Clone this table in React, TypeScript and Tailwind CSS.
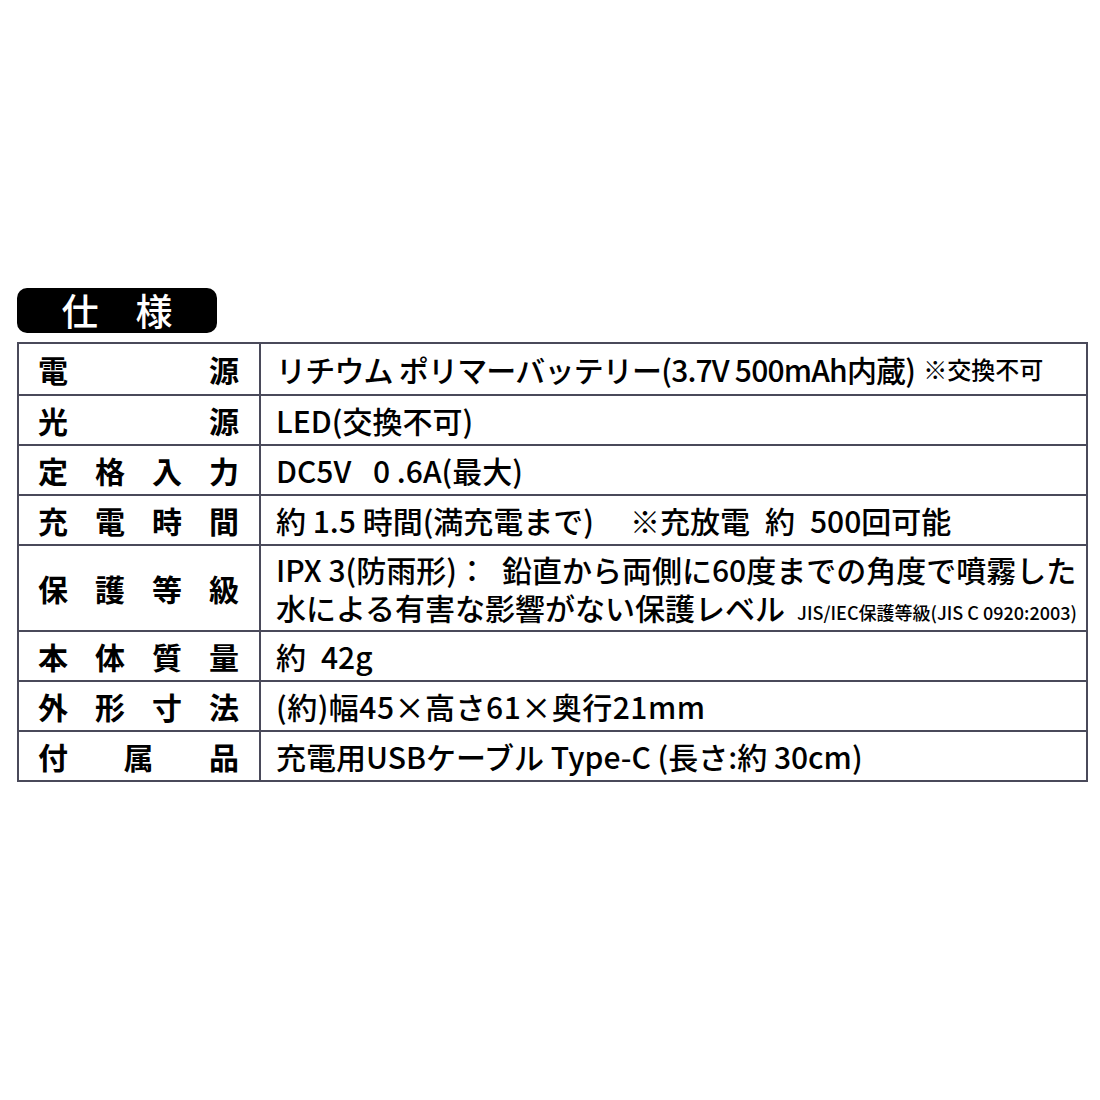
import React from 'react';

const font = "font-['Noto_Sans_CJK_JP','Noto_Sans',sans-serif]";

interface SpecRow {
  label: string[];
  value: React.ReactNode;
  tall?: boolean;
}

const rows: SpecRow[] = [
  {
    label: ['電', '源'],
    value: (
      <>
        <span className="tracking-[-0.8px]">リチウム ポリマーバッテリー(3.7V 500mAh内蔵)</span>
        <span className="ml-[8px] text-[24px]">※交換不可</span>
      </>
    ),
  },
  { label: ['光', '源'], value: 'LED(交換不可)' },
  { label: ['定', '格', '入', '力'], value: 'DC5V\u2002 0 .6A(最大)' },
  {
    label: ['充', '電', '時', '間'],
    value: (
      <>
        約 1.5 時間(満充電まで)
        <span className="ml-[36px]">※充放電{'\u2002'}約{'\u2002'}500回可能</span>
      </>
    ),
  },
  {
    label: ['保', '護', '等', '級'],
    tall: true,
    value: (
      <div className="flex flex-col gap-[8px]">
        <span>IPX 3(防雨形)：{'\u2002'}鉛直から両側に60度までの角度で噴霧した</span>
        <span className="flex items-baseline">
          水による有害な影響がない保護レベル
          <span className="ml-[12px] text-[18px]">JIS/IEC保護等級(JIS C 0920:2003)</span>
        </span>
      </div>
    ),
  },
  { label: ['本', '体', '質', '量'], value: '約\u200242g' },
  {
    label: ['外', '形', '寸', '法'],
    value: <span className="tracking-[0.5px]">(約)幅45×高さ61×奥行21mm</span>,
  },
  { label: ['付', '属', '品'], value: '充電用USBケーブル Type-C (長さ:約 30cm)' },
];

export default function App() {
  return (
    <div className={`h-[1100px] w-[1100px] bg-white pt-[288px] pl-[17px] pr-[12px] ${font}`}>
      {/* title badge */}
      <div className="flex h-[45px] w-[200px] items-center justify-center rounded-[10px] bg-black text-[37px] font-medium leading-none text-white">
        仕　様
      </div>

      {/* spec table */}
      <div className="mt-[9px] border-2 border-[#4a4a5a] text-black">
        {rows.map((row, i) => (
          <div
            key={i}
            className={`flex ${row.tall ? 'h-[86px]' : 'h-[50px]'} ${i > 0 ? 'border-t-2 border-[#4a4a5a]' : ''}`}
          >
            <div className="flex w-[242px] shrink-0 items-center justify-between border-r-2 border-[#4a4a5a] pl-[19px] pr-[20px] text-[30px] font-bold leading-none">
              {row.label.map((c, j) => (
                <span key={j}>{c}</span>
              ))}
            </div>
            <div className="flex flex-1 items-center whitespace-nowrap pl-[15px] text-[30px] font-medium leading-none">
              {row.value}
            </div>
          </div>
        ))}
      </div>
    </div>
  );
}
